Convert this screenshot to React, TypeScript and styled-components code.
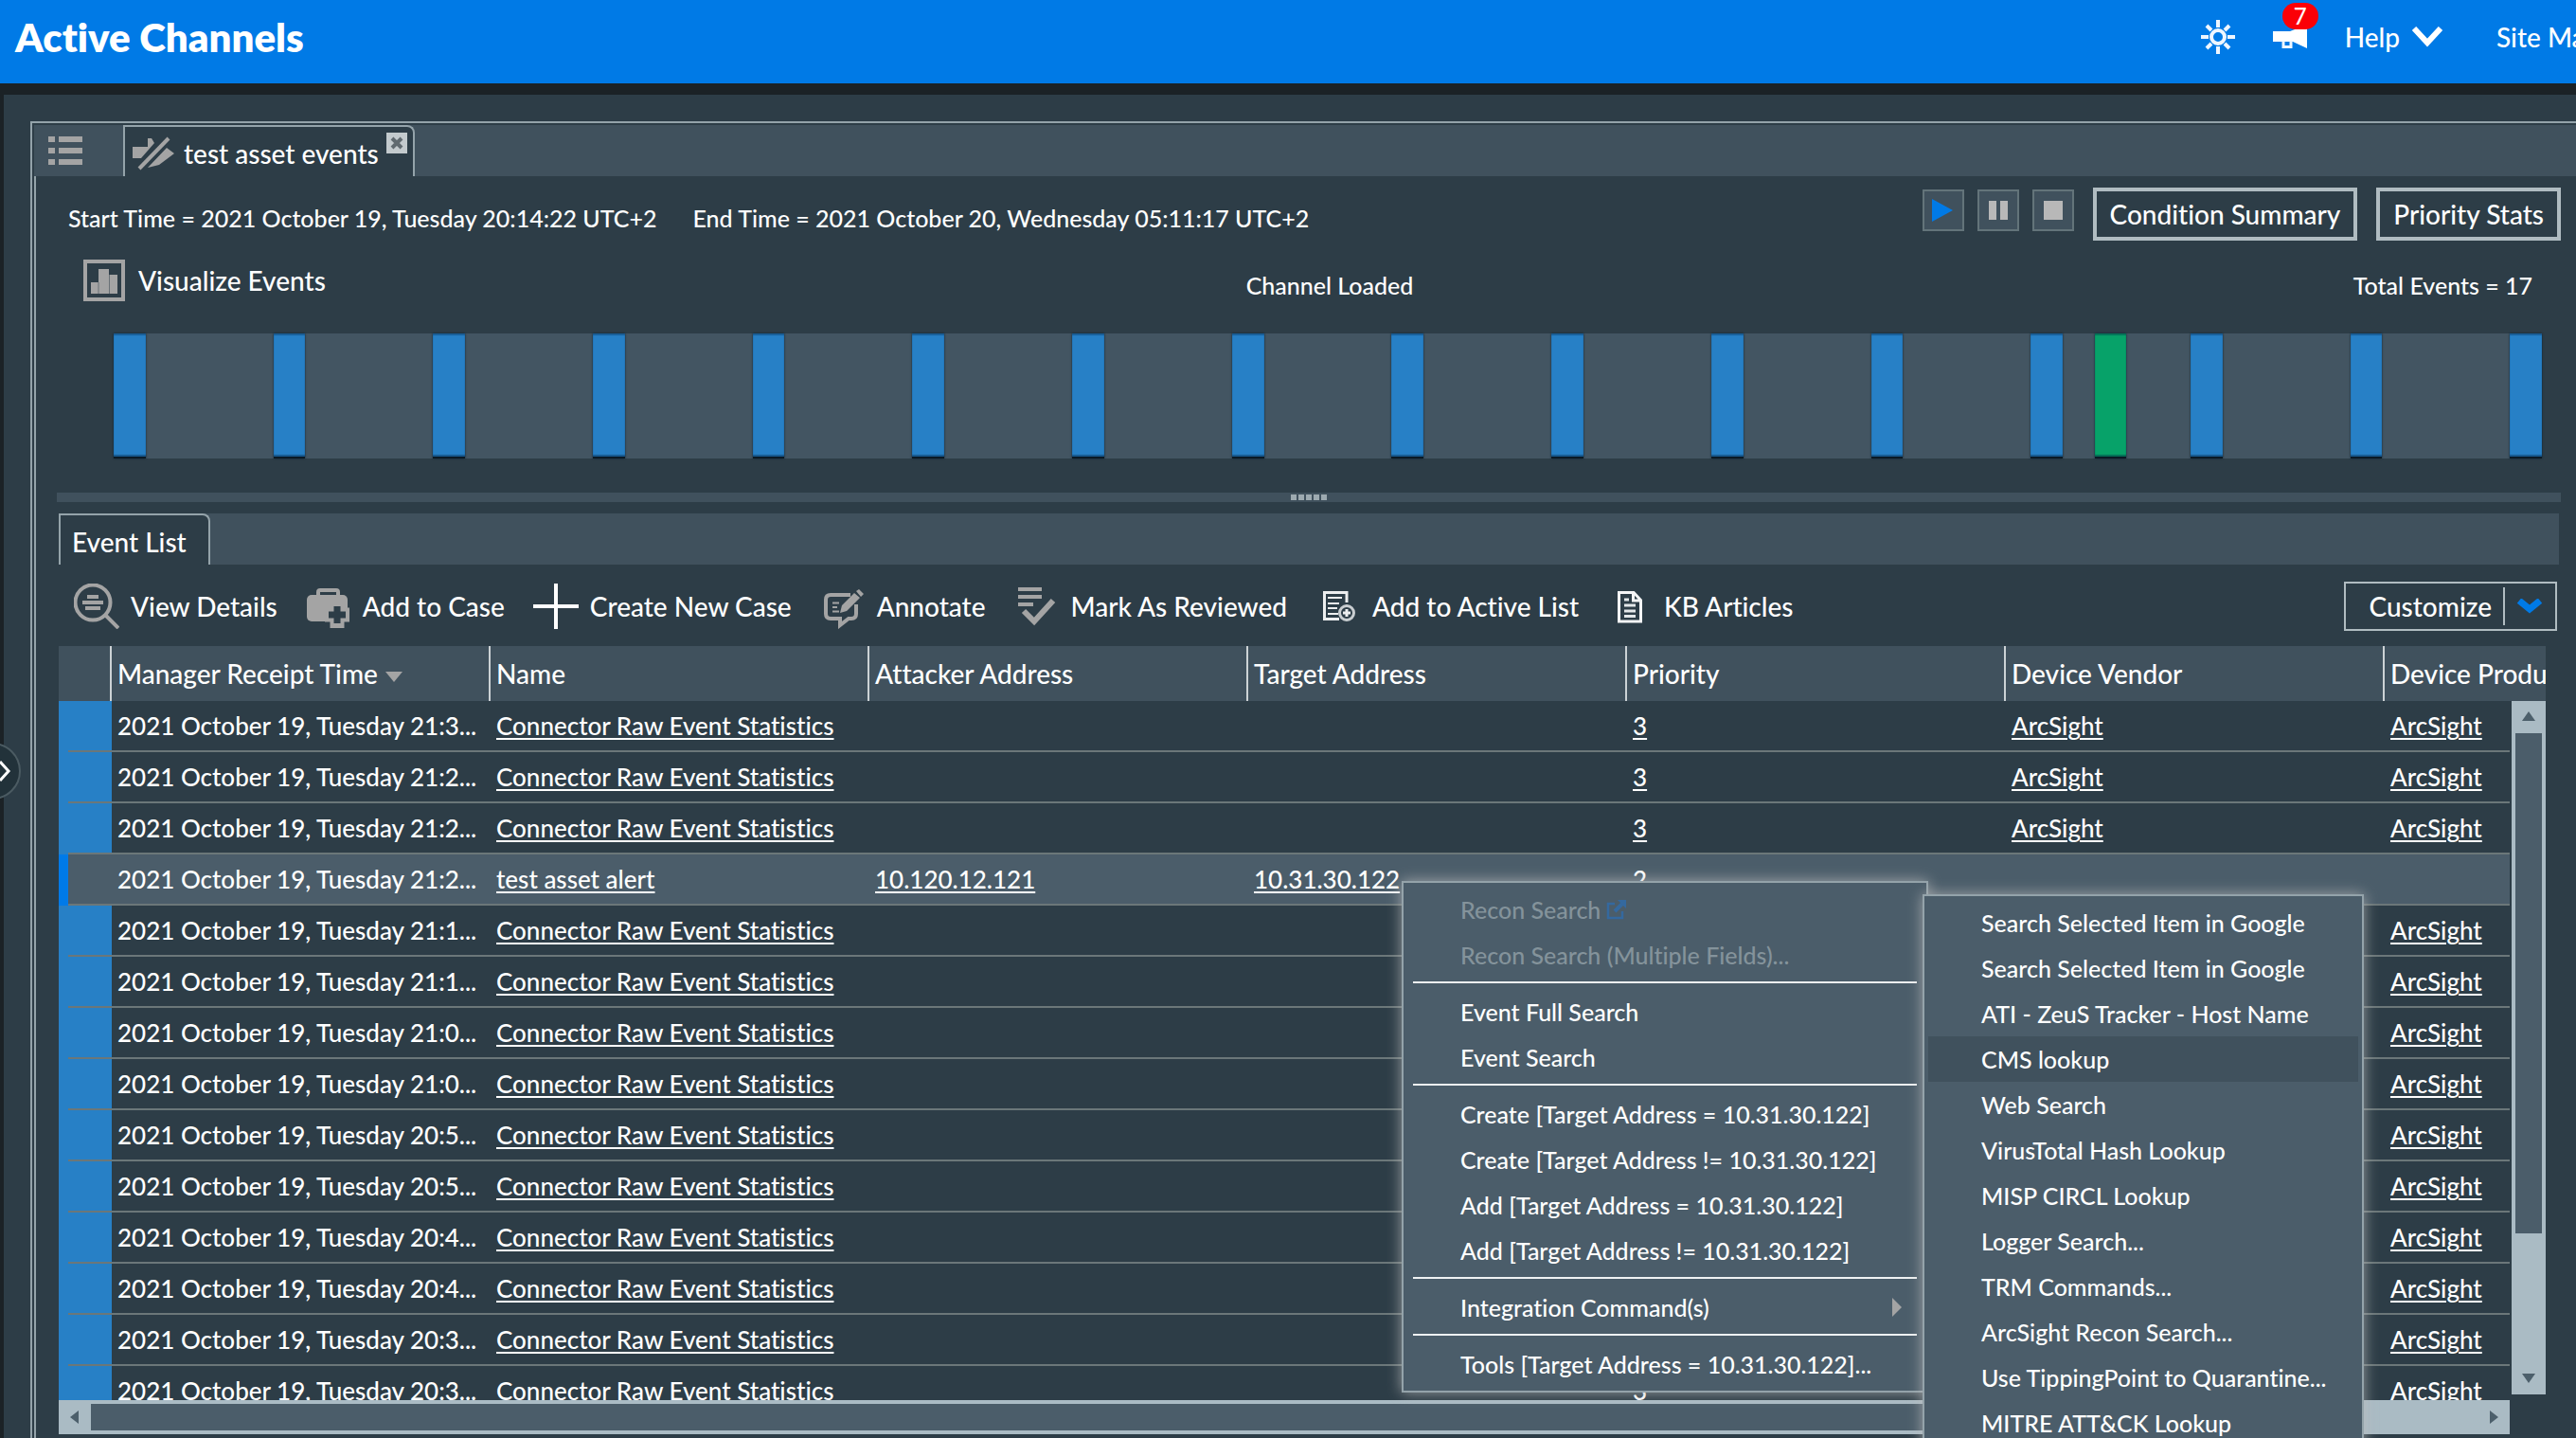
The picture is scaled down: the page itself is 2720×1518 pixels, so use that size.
import React from "react";
import styled, { createGlobalStyle, css } from "styled-components";

const color = {
  header: "#007ae6",
  shadow: "#1b2226",
  page: "#2d3d47",
  bar: "#40515d",
  chart: "#435562",
  raised: "#4b5d6a",
  frame: "#94a3aa",
  outline: "#b0bcc1",
  rowLine: "#6b7779",
  event: "#2780c6",
  eventOk: "#07a269",
  track: "#aabbc4",
  icon: "#a4a4a4",
  muted: "#84939b",
};

const GlobalStyle = createGlobalStyle`
  *, *::before, *::after { box-sizing: border-box; }
  body { margin: 0; background: ${color.page}; }
  button { font: inherit; color: inherit; background: none; border: 0; padding: 0; cursor: pointer; }
  a { color: inherit; }
`;

const Page = styled.div`
  position: relative;
  display: flex;
  flex-direction: column;
  height: 100vh;
  overflow: hidden;
  background: ${color.page};
  color: #fff;
  font-family: Lato, "Liberation Sans", sans-serif;
  font-size: 28px;
  font-weight: 500;
  line-height: 34px;
  font-variant-ligatures: none;
  white-space: nowrap;
`;

/* ---------- header ---------- */

const Header = styled.header`
  display: flex;
  flex: none;
  justify-content: space-between;
  height: 100px;
  padding: 14px 0 0 16px;
  background: ${color.header};
  border-bottom: 12px solid ${color.shadow};
`;

const Title = styled.h1`
  margin: 0;
  font-size: 42px;
  line-height: 50px;
  font-weight: 800;
`;

const Nav = styled.nav`
  display: flex;
  align-items: center;
  align-self: flex-start;
  gap: 40px;
  height: 50px;
`;

const IconButton = styled.button`
  position: relative;
  display: flex;
`;

const Badge = styled.span`
  position: absolute;
  left: 10px;
  bottom: 26px;
  width: 38px;
  border-radius: 14px;
  background: #fb0007;
  font-size: 24px;
  line-height: 28px;
  text-align: center;
`;

const HelpButton = styled.button`
  display: flex;
  align-items: center;
  gap: 12px;
`;

const SiteLink = styled.a`
  width: 100px;
  padding-left: 16px;
  overflow: hidden;
  text-decoration: none;
`;

/* ---------- workspace ---------- */

const Workspace = styled.main`
  display: flex;
  flex: 1;
  flex-direction: column;
  min-height: 0;
  padding: 28px 0 0 28px;
  border-left: 4px solid ${color.shadow};
`;

const Frame = styled.div`
  display: flex;
  flex: 1;
  flex-direction: column;
  min-height: 0;
  padding: 2px 0 0 2px;
  border: solid ${color.frame};
  border-width: 2px 0 0 2px;
`;

const TabBar = styled.div`
  display: flex;
  flex: none;
  height: 54px;
  background: ${color.bar};
`;

const ListButton = styled.button`
  width: 94px;
  padding: 12px 0 0 15px;
  display: flex;
`;

const tabShape = css`
  background: ${color.page};
  border: 2px solid ${color.frame};
  border-bottom: 0;
  border-top-right-radius: 8px;
`;

const ChannelTab = styled.div`
  ${tabShape}
  display: flex;
  gap: 8px;
  padding: 6px 6px 0 8px;
`;

const TabLabel = styled.span`
  display: flex;
  align-items: center;
  gap: 10px;
  height: 44px;
`;

const CloseButton = styled.button`
  display: flex;
  width: 22px;
  height: 22px;
  background: #c3cacd;
`;

const Content = styled.section`
  display: flex;
  flex: 1;
  flex-direction: column;
  min-height: 0;
  border-left: 2px solid ${color.frame};
`;

const InfoRow = styled.div`
  display: flex;
  flex: none;
  justify-content: space-between;
  padding: 12px 16px 0 34px;
`;

const Times = styled.div`
  display: flex;
  gap: 38px;
  font-size: 25px;
  line-height: 64px;
`;

const Controls = styled.div`
  display: flex;
  align-items: flex-start;
  gap: 20px;
  height: 66px;
`;

const Player = styled.div`
  display: flex;
  gap: 14px;
  padding-top: 2px;
`;

const PlayerButton = styled.button`
  display: flex;
  align-items: center;
  justify-content: center;
  width: 44px;
  height: 44px;
  background: ${color.bar};
  border: 2px solid #63747a;
`;

const OutlineButton = styled.button`
  height: 56px;
  padding: 0 14px;
  border: 4px solid ${color.outline};
`;

const StatusRow = styled.div`
  display: grid;
  flex: none;
  grid-template-columns: 1fr auto 1fr;
  align-items: end;
  padding: 10px 0 0 50px;
  font-size: 25px;
`;

const VisualizeButton = styled.button`
  display: flex;
  align-items: center;
  justify-self: start;
  gap: 14px;
  font-size: 28px;
`;

const Total = styled.span`
  padding-right: 46px;
  text-align: right;
`;

const SLOTS = 76;

const Timeline = styled.div`
  display: grid;
  flex: none;
  grid-template-columns: repeat(${SLOTS}, 1fr);
  height: 132px;
  margin: 34px 36px 0 82px;
  background: ${color.chart};
`;

const Bar = styled.div<{ $slot: number; $ok?: boolean }>`
  grid-column: ${(p) => p.$slot + 1};
  grid-row: 1;
  background: ${(p) => (p.$ok ? color.eventOk : color.event)};
  border-bottom: 2px solid #0a1a26;
  box-shadow: inset 0 2px 1px rgba(0, 30, 60, 0.35), inset 0 -2px 1px rgba(0, 30, 60, 0.4), 0 0 2px rgba(10, 30, 45, 0.9);
`;

const Splitter = styled.div`
  display: flex;
  flex: none;
  align-items: center;
  justify-content: center;
  gap: 2px;
  height: 10px;
  margin: 36px 16px 12px 22px;
  background: ${color.bar};
`;

const Dot = styled.i`
  width: 6px;
  height: 6px;
  background: #9daab0;
`;

/* ---------- event list ---------- */

const ListPane = styled.section`
  display: flex;
  flex: 1;
  flex-direction: column;
  min-height: 0;
  margin: 0 18px 4px 24px;
`;

const ListTab = styled.button`
  ${tabShape}
  width: 160px;
  padding: 4px 0 0 12px;
  text-align: left;
`;

const Toolbar = styled.div`
  display: flex;
  flex: none;
  align-items: center;
  gap: 30px;
  height: 86px;
  padding: 2px 2px 0 16px;
`;

const ToolButton = styled.button`
  display: flex;
  align-items: center;
  gap: 12px;
`;

const Customize = styled.button`
  display: flex;
  align-items: center;
  height: 52px;
  margin-left: auto;
  padding: 0 13px 0 25px;
  border: 2px solid ${color.outline};
`;

const CustomizeArrow = styled.span`
  display: flex;
  align-items: center;
  height: 40px;
  margin-left: 12px;
  padding-left: 12px;
  border-left: 2px solid ${color.outline};
`;

const Grid = styled.div`
  display: grid;
  flex: 1;
  grid-template-columns: minmax(0, 1fr) 36px;
  grid-template-rows: 58px minmax(0, 1fr) 36px;
  column-gap: 2px;
  min-height: 0;
  margin-right: 14px;
`;

const HeadView = styled.div`
  grid-column: 1 / 3;
  overflow: hidden;
  background: ${color.bar};
`;

const BodyView = styled.div`
  overflow: hidden;
`;

const Table = styled.table`
  width: 2856px;
  table-layout: fixed;
  border-collapse: separate;
  border-spacing: 0;
  font-size: 26px;
`;

const Th = styled.th`
  height: 58px;
  padding: 0 6px;
  border-right: 2px solid #ccd2d5;
  font-size: 28px;
  font-weight: 500;
  text-align: left;
`;

const SortMark = styled.span`
  display: inline-block;
  margin-left: 8px;
  vertical-align: 2px;
  border: 9px solid transparent;
  border-top: 11px solid ${color.icon};
  border-bottom: 0;
`;

const Td = styled.td`
  height: 54px;
  padding: 0 6px;
  border-bottom: 2px solid ${color.rowLine};
`;

const Marker = styled.td`
  padding: 0;
  background: ${color.event};
`;

const Gutter = styled(Td)`
  background: ${color.event};
`;

const Row = styled.tr<{ $selected?: boolean }>`
  ${(p) =>
    p.$selected &&
    css`
      ${Td} { background: ${color.raised}; }
      ${Gutter} { background: ${color.raised}; }
      ${Marker} { background: #007ae8; }
    `}
`;

const CellLink = styled.a`
  text-decoration: underline;
  text-decoration-thickness: 2px;
  text-underline-offset: 3px;
`;

const VScroll = styled.div`
  display: flex;
  flex-direction: column;
  margin-bottom: 6px;
  padding: 0 4px;
  background: ${color.track};
`;

const HScroll = styled.div`
  display: flex;
  padding: 4px 0;
  background: ${color.track};
`;

const Lane = styled.div`
  flex: 1;
`;

const VThumb = styled.div`
  height: 79.5%;
  background: ${color.raised};
`;

const HThumb = styled.div`
  width: 94%;
  height: 100%;
  background: ${color.raised};
`;

const ScrollArrow = styled.button`
  display: flex;
  flex: 0 0 34px;
  align-items: center;
  justify-content: center;
`;

/* ---------- overlays ---------- */

const Expander = styled.button`
  position: absolute;
  top: 784px;
  left: -38px;
  display: flex;
  align-items: center;
  justify-content: flex-end;
  width: 60px;
  height: 60px;
  padding-right: 8px;
  background: #22323a;
  border: 2px solid #4b5b62;
  border-radius: 50%;
`;

const Menu = styled.div<{ $x: number; $y: number; $width: number }>`
  position: absolute;
  left: ${(p) => p.$x}px;
  top: ${(p) => p.$y}px;
  display: flex;
  flex-direction: column;
  width: ${(p) => p.$width}px;
  padding: 4px;
  background: ${color.raised};
  border: 2px solid ${color.frame};
  box-shadow: 0 0 14px rgba(190, 190, 190, 0.75);
  font-size: 25px;
`;

const MenuItem = styled.button<{ $active?: boolean }>`
  display: flex;
  align-items: center;
  gap: 6px;
  height: 48px;
  padding: 0 22px 0 56px;
  background: ${(p) => (p.$active ? color.bar : "none")};

  &:disabled { color: ${color.muted}; }
`;

const MenuRule = styled.hr`
  width: calc(100% - 12px);
  height: 2px;
  margin: 4px 6px 6px;
  border: 0;
  background: #eef1f2;
`;

const SubArrow = styled.span`
  margin-left: auto;
  border: 10px solid transparent;
  border-left: 10px solid ${color.icon};
  border-right: 0;
`;

/* ---------- icons ---------- */

const Svg = ({ w, h = w, children }: { w: number; h?: number; children: React.ReactNode }) => (
  <svg width={w} height={h} viewBox={`0 0 ${w} ${h}`} fill="none" aria-hidden="true">
    {children}
  </svg>
);

const SunIcon = () => (
  <Svg w={36}>
    <g stroke="#eef6ff" strokeWidth="4">
      <circle cx="18" cy="18" r="7" />
      <path d="M18 0v8M18 28v8M0 18h8M28 18h8M6 6l5 5M25 25l5 5M30 6l-5 5M11 25l-5 5" />
    </g>
  </Svg>
);

const MegaphoneIcon = () => (
  <Svg w={36}>
    <path d="M0 12h18L36 5v25l-15-7H0z" fill="#fff" />
    <path d="M11 22v6.500h8V22" stroke="#eef6ff" strokeWidth="3" />
  </Svg>
);

const ChannelListIcon = () => (
  <Svg w={36} h={32}>
    <path d="M0 0h7v6H0zM11 0h25v6H11zM0 12h7v6H0zM11 12h25v6H11zM0 24h7v6H0zM11 24h25v6H11z" fill={color.icon} />
  </Svg>
);

const PlugIcon = () => (
  <Svg w={44} h={36}>
    <path d="M0 11h16V2h4l3 5L9 23H0zM36 12l8 6-16 12-12 3z" fill={color.icon} />
    <path d="M7 34L38 2" stroke={color.icon} strokeWidth="4" />
  </Svg>
);

const CloseIcon = () => (
  <Svg w={22}>
    <path d="M6 6l10 10M16 6L6 16" stroke="#606a6f" strokeWidth="4" />
  </Svg>
);

const BarsIcon = () => (
  <Svg w={44}>
    <path d="M2 2h40v40H2z" stroke={color.icon} strokeWidth="4" />
    <path d="M8 24h8V10h11v6h9v20H8z" fill={color.icon} />
    <path d="M16 24v12M27.500 16v20" stroke={color.page} strokeOpacity=".5" />
  </Svg>
);

const DetailsIcon = () => (
  <Svg w={48}>
    <g stroke={color.icon} strokeWidth="4">
      <circle cx="20" cy="20" r="18.500" />
      <path d="M33 33l14 14M14 14h12M9 20h22M12 26h16" />
    </g>
  </Svg>
);

const CaseIcon = () => (
  <Svg w={48}>
    <path d="M13 14V9q0-2 2-2h17q2 0 2 2v5" stroke={color.icon} strokeWidth="4" />
    <rect x="1" y="12" width="43" height="28" rx="5" fill={color.icon} />
    <path d="M33 20v27M20 33h26" stroke={color.icon} strokeWidth="15" />
    <path d="M33 24v18M24 33h18" stroke={color.page} strokeWidth="7" />
  </Svg>
);

const PlusIcon = () => (
  <Svg w={48}>
    <path d="M24 0v48M0 24h48" stroke="#fff" strokeWidth="4" />
  </Svg>
);

const AnnotateIcon = () => (
  <Svg w={48}>
    <path d="M32 12H11q-5 0-5 5v15q0 5 5 5h10v7l9-7h3q5 0 5-5V22" stroke={color.icon} strokeWidth="4" />
    <path d="M21 31l2-8L36 10l6 5-14 14zM38 8l3-2 5 5-3 3z" fill={color.icon} />
    <path d="M13 20.500h7M13 25h5M13 29.500h7" stroke={color.icon} strokeWidth="2" />
  </Svg>
);

const ReviewedIcon = () => (
  <Svg w={48}>
    <path d="M5 6h25M5 14h25M5 22h16" stroke={color.icon} strokeWidth="4" />
    <path d="M11 29l11 11 20-22" stroke={color.icon} strokeWidth="6" />
  </Svg>
);

const ActiveListIcon = () => (
  <Svg w={48}>
    <path d="M33 20V9.500H9.500v28H25" stroke="#eceeef" strokeWidth="3" />
    <path d="M13 15h15M13 21h12M13 26h10M13 32h11" stroke="#eceeef" strokeWidth="2" />
    <circle cx="33" cy="31" r="7.500" stroke="#c9ced1" strokeWidth="3" />
    <path d="M33 27v8M29 31h8" stroke="#eceeef" strokeWidth="3" />
  </Svg>
);

const ArticleIcon = () => (
  <Svg w={48}>
    <path d="M12.500 9.500H28l7.500 8V40h-23zM27.500 10v8h8" stroke="#f4f5f6" strokeWidth="3" />
    <path d="M18 17h5M18 23h12M18 29h12M18 34.500h12" stroke="#e3e7e9" strokeWidth="3" />
  </Svg>
);

const ExternalIcon = () => (
  <Svg w={22}>
    <path d="M9 5H2v15h15v-7" stroke="#34699f" strokeWidth="2.500" />
    <path d="M9 13L18 4" stroke="#34699f" strokeWidth="4" />
    <path d="M12 1h9v9z" fill="#34699f" />
  </Svg>
);

const arrowPaths = { up: "M0 11L7 1l7 10z", down: "M0 2h14L7 12z", left: "M11 0v14L2 7z", right: "M3 0v14l9-7z" };

const ArrowGlyph = ({ dir }: { dir: keyof typeof arrowPaths }) => (
  <Svg w={14}>
    <path d={arrowPaths[dir]} fill="#4c5f6b" />
  </Svg>
);

/* ---------- data ---------- */

const tools = [
  { label: "View Details", Icon: DetailsIcon },
  { label: "Add to Case", Icon: CaseIcon },
  { label: "Create New Case", Icon: PlusIcon },
  { label: "Annotate", Icon: AnnotateIcon },
  { label: "Mark As Reviewed", Icon: ReviewedIcon },
  { label: "Add to Active List", Icon: ActiveListIcon },
  { label: "KB Articles", Icon: ArticleIcon },
];

const bars = [...Array.from({ length: 16 }, (_, i) => ({ slot: i * 5, ok: false })), { slot: 62, ok: true }];

const columns = ["Manager Receipt Time", "Name", "Attacker Address", "Target Address", "Priority", "Device Vendor", "Device Product"];

type Event = { time: string; name: string; attacker?: string; target?: string; priority: string; vendor?: string; selected?: boolean };

const stat = (time: string): Event => ({ time, name: "Connector Raw Event Statistics", priority: "3", vendor: "ArcSight" });

const events: Event[] = [
  stat("21:3"),
  stat("21:2"),
  stat("21:2"),
  { time: "21:2", name: "test asset alert", attacker: "10.120.12.121", target: "10.31.30.122", priority: "2", selected: true },
  ...["21:1", "21:1", "21:0", "21:0", "20:5", "20:5", "20:4", "20:4", "20:3", "20:3"].map(stat),
];

const createItems = [
  "Create [Target Address = 10.31.30.122]",
  "Create [Target Address != 10.31.30.122]",
  "Add [Target Address = 10.31.30.122]",
  "Add [Target Address != 10.31.30.122]",
];

const commands = [
  "Search Selected Item in Google",
  "Search Selected Item in Google",
  "ATI - ZeuS Tracker - Host Name",
  "CMS lookup",
  "Web Search",
  "VirusTotal Hash Lookup",
  "MISP CIRCL Lookup",
  "Logger Search...",
  "TRM Commands...",
  "ArcSight Recon Search...",
  "Use TippingPoint to Quarantine...",
  "MITRE ATT&CK Lookup",
];

/* ---------- views ---------- */

const Columns = () => (
  <colgroup>
    <col width="10" />
    <col width="46" />
    {columns.map((c) => (
      <col key={c} width="400" />
    ))}
  </colgroup>
);

const LinkCell = ({ text }: { text?: string }) => <Td>{text && <CellLink href="#event">{text}</CellLink>}</Td>;

const EventGrid = () => (
  <Grid>
    <HeadView>
      <Table>
        <Columns />
        <thead>
          <tr>
            <Th colSpan={2} />
            {columns.map((c, i) => (
              <Th key={c} scope="col">
                {c}
                {i === 0 && <SortMark />}
              </Th>
            ))}
          </tr>
        </thead>
      </Table>
    </HeadView>
    <BodyView>
      <Table>
        <Columns />
        <tbody>
          {events.map((e, i) => (
            <Row key={i} $selected={e.selected}>
              <Marker />
              <Gutter />
              <Td>2021 October 19, Tuesday {e.time}...</Td>
              <LinkCell text={e.name} />
              <LinkCell text={e.attacker} />
              <LinkCell text={e.target} />
              <LinkCell text={e.priority} />
              <LinkCell text={e.vendor} />
              <LinkCell text={e.vendor} />
            </Row>
          ))}
        </tbody>
      </Table>
    </BodyView>
    <VScroll>
      <ScrollArrow aria-label="Scroll up"><ArrowGlyph dir="up" /></ScrollArrow>
      <Lane><VThumb /></Lane>
      <ScrollArrow aria-label="Scroll down"><ArrowGlyph dir="down" /></ScrollArrow>
    </VScroll>
    <HScroll>
      <ScrollArrow aria-label="Scroll left"><ArrowGlyph dir="left" /></ScrollArrow>
      <Lane><HThumb /></Lane>
      <ScrollArrow aria-label="Scroll right"><ArrowGlyph dir="right" /></ScrollArrow>
    </HScroll>
  </Grid>
);

const ContextMenu = () => (
  <Menu role="menu" $x={1480} $y={930} $width={556}>
    <MenuItem role="menuitem" disabled>Recon Search<ExternalIcon /></MenuItem>
    <MenuItem role="menuitem" disabled>Recon Search (Multiple Fields)...</MenuItem>
    <MenuRule />
    <MenuItem role="menuitem">Event Full Search</MenuItem>
    <MenuItem role="menuitem">Event Search</MenuItem>
    <MenuRule />
    {createItems.map((t) => (
      <MenuItem role="menuitem" key={t}>{t}</MenuItem>
    ))}
    <MenuRule />
    <MenuItem role="menuitem" aria-haspopup="menu">Integration Command(s)<SubArrow /></MenuItem>
    <MenuRule />
    <MenuItem role="menuitem">Tools [Target Address = 10.31.30.122]...</MenuItem>
  </Menu>
);

const CommandMenu = () => (
  <Menu role="menu" $x={2030} $y={944} $width={466}>
    {commands.map((t, i) => (
      <MenuItem role="menuitem" key={i} $active={t === "CMS lookup"}>{t}</MenuItem>
    ))}
  </Menu>
);

export default function App() {
  return (
    <Page>
      <GlobalStyle />
      <Header>
        <Title>Active Channels</Title>
        <Nav>
          <IconButton aria-label="Theme"><SunIcon /></IconButton>
          <IconButton aria-label="Notifications"><MegaphoneIcon /><Badge>7</Badge></IconButton>
          <HelpButton>
            Help
            <Svg w={34} h={22}><path d="M3 2l14 15L31 2" stroke="#fff" strokeWidth="6" /></Svg>
          </HelpButton>
          <SiteLink href="#site">Site Map</SiteLink>
        </Nav>
      </Header>

      <Workspace>
        <Frame>
          <TabBar>
            <ListButton aria-label="Channel list"><ChannelListIcon /></ListButton>
            <ChannelTab>
              <TabLabel><PlugIcon />test asset events</TabLabel>
              <CloseButton aria-label="Close tab"><CloseIcon /></CloseButton>
            </ChannelTab>
          </TabBar>

          <Content>
            <InfoRow>
              <Times>
                <span>Start Time = 2021 October 19, Tuesday 20:14:22 UTC+2</span>
                <span>End Time = 2021 October 20, Wednesday 05:11:17 UTC+2</span>
              </Times>
              <Controls>
                <Player>
                  <PlayerButton aria-label="Play"><Svg w={28} h={26}><path d="M2 1l22 12L2 25z" fill={color.header} /></Svg></PlayerButton>
                  <PlayerButton aria-label="Pause"><Svg w={20}><path d="M0 0h8v20H0zM12 0h8v20h-8z" fill="#b8b8b8" /></Svg></PlayerButton>
                  <PlayerButton aria-label="Stop"><Svg w={20}><path d="M0 0h20v20H0z" fill="#b8b8b8" /></Svg></PlayerButton>
                </Player>
                <OutlineButton>Condition Summary</OutlineButton>
                <OutlineButton>Priority Stats</OutlineButton>
              </Controls>
            </InfoRow>

            <StatusRow>
              <VisualizeButton><BarsIcon />Visualize Events</VisualizeButton>
              <span>Channel Loaded</span>
              <Total>Total Events = 17</Total>
            </StatusRow>

            <Timeline role="img" aria-label="Event timeline">
              {bars.map((b) => (
                <Bar key={b.slot} $slot={b.slot} $ok={b.ok} />
              ))}
            </Timeline>

            <Splitter><Dot /><Dot /><Dot /><Dot /><Dot /></Splitter>

            <ListPane>
              <TabBar><ListTab>Event List</ListTab></TabBar>
              <Toolbar>
                {tools.map(({ label, Icon }) => (
                  <ToolButton key={label}><Icon />{label}</ToolButton>
                ))}
                <Customize>
                  Customize
                  <CustomizeArrow>
                    <Svg w={28} h={16}><path d="M3 2l11 9L25 2" stroke={color.header} strokeWidth="7" /></Svg>
                  </CustomizeArrow>
                </Customize>
              </Toolbar>
              <EventGrid />
            </ListPane>
          </Content>
        </Frame>
      </Workspace>

      <Expander aria-label="Expand navigation">
        <Svg w={14} h={24}><path d="M2 2l9 10-9 10" stroke="#fff" strokeWidth="3" /></Svg>
      </Expander>
      <ContextMenu />
      <CommandMenu />
    </Page>
  );
}
